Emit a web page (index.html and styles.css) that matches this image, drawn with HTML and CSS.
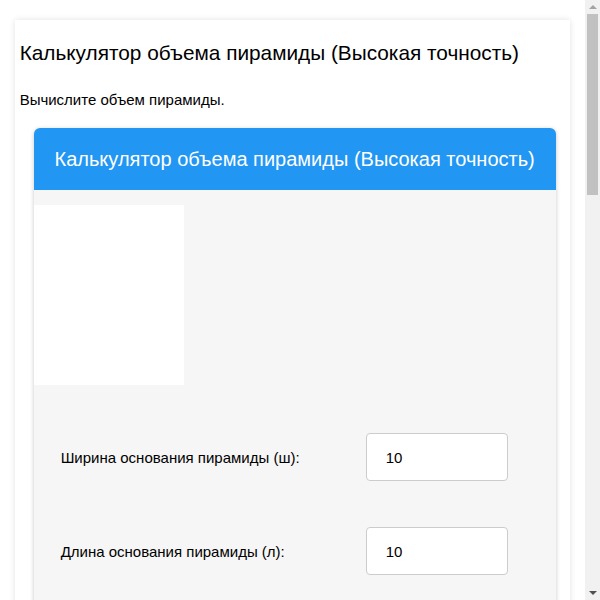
FILE: index.html
```html
<!DOCTYPE html>
<html lang="ru">
<head>
<meta charset="utf-8">
<title>Калькулятор объема пирамиды</title>
<link rel="stylesheet" href="styles.css">
</head>
<body>
<div class="page">
  <h1 class="page-title">Калькулятор объема пирамиды (Высокая точность)</h1>
  <p class="intro">Вычислите объем пирамиды.</p>
  <div class="calc">
    <div class="calc-header">Калькулятор объема пирамиды (Высокая точность)</div>
    <div class="calc-body">
      <div class="figure"></div>
      <div class="rows">
        <div class="row">
          <label class="row-label" for="w">Ширина основания пирамиды (ш):</label>
          <input class="row-input" id="w" type="text" value="10">
        </div>
        <div class="row">
          <label class="row-label" for="l">Длина основания пирамиды (л):</label>
          <input class="row-input" id="l" type="text" value="10">
        </div>
        <div class="row">
          <label class="row-label" for="h">Высота пирамиды (в):</label>
          <input class="row-input" id="h" type="text" value="10">
        </div>
        <div class="row">
          <label class="row-label" for="d">Значащие цифры:</label>
          <input class="row-input" id="d" type="text" value="10">
        </div>
        <div class="row row-center">
          <button class="calc-btn" type="button">Рассчитать</button>
        </div>
        <div class="row">
          <span class="row-label">Объем пирамиды (V):</span>
          <input class="row-input" type="text" value="333.3333333">
        </div>
        <div class="row">
          <span class="row-label">Площадь основания (S):</span>
          <input class="row-input" type="text" value="100">
        </div>
      </div>
    </div>
  </div>
  <div class="notes">
    <h2 class="notes-title">Формула</h2>
    <p class="notes-text">V = (ш × л × в) / 3</p>
    <p class="notes-text">Объем пирамиды равен одной трети произведения площади основания на высоту.</p>
    <h2 class="notes-title">Как пользоваться</h2>
    <p class="notes-text">Введите ширину и длину основания, а также высоту пирамиды, затем нажмите кнопку «Рассчитать».</p>
    <p class="notes-text">Количество значащих цифр задаёт точность, с которой будет показан результат.</p>
  </div>
</div>
<div class="scrollbar" aria-hidden="true">
  <div class="sb-btn"><span class="sb-up"></span></div>
  <div class="sb-track">
    <div class="sb-thumb"></div>
  </div>
  <div class="sb-btn"><span class="sb-down"></span></div>
</div>
</body>
</html>
```

FILE: styles.css
```css
html {
  margin: 0;
  padding: 0;
}

body {
  margin: 0;
  padding: 0 15px 0 0;
  background: #ffffff;
  font-family: "Liberation Sans", Arial, sans-serif;
  color: #000;
}

.page {
  width: 95%;
  margin: 20px auto 0;
  padding: 5px 5px 40px;
  box-sizing: border-box;
  background: #fff;
  box-shadow: 0 0 6px rgba(0, 0, 0, 0.12);
}

.page-title {
  font-size: 20.8px;
  font-weight: normal;
  margin: 16px 0 26px;
}

.intro {
  font-size: 15px;
  margin: 0 0 20px;
}

.calc {
  margin-left: 14px;
  width: 522px;
  border-radius: 6px;
  overflow: hidden;
  background: #f6f6f6;
  box-shadow: 0 1px 4px rgba(0, 0, 0, 0.22);
}

.calc-header {
  background: #2196f3;
  color: #fff;
  font-size: 20px;
  line-height: 23px;
  padding: 20px 0 19px;
  text-align: center;
}

.calc-body {
  padding: 15px 0 30px;
}

.figure {
  width: 150px;
  height: 180px;
  background: #fff;
}

.rows {
  margin-top: 25px;
  padding: 0 48px 0 27px;
}

.row {
  display: flex;
  align-items: center;
  justify-content: space-between;
  padding: 23px 0;
}

.row-center {
  justify-content: center;
}

.row-label {
  font-size: 15px;
}

.row-input {
  width: 142px;
  height: 48px;
  box-sizing: border-box;
  border: 1px solid #cccccc;
  border-radius: 4px;
  background: #fff;
  padding: 0 19px;
  font-family: "Liberation Sans", Arial, sans-serif;
  font-size: 15px;
  color: #000;
}

.calc-btn {
  background: #2196f3;
  color: #fff;
  border: none;
  border-radius: 4px;
  padding: 14px 40px;
  font-family: "Liberation Sans", Arial, sans-serif;
  font-size: 16px;
}

.notes {
  padding: 20px 14px 0;
}

.notes-title {
  font-size: 18px;
  font-weight: normal;
  margin: 30px 0 16px;
}

.notes-text {
  font-size: 15px;
  line-height: 24px;
  margin: 0 0 16px;
}

/* scrollbar drawn over the right edge of the viewport */
.scrollbar {
  position: fixed;
  top: 0;
  right: 0;
  width: 15px;
  height: 100vh;
  background: #f1f1f1;
  display: flex;
  flex-direction: column;
}

.sb-btn {
  height: 14px;
  display: flex;
  align-items: center;
  justify-content: center;
  flex: none;
}

.sb-up {
  width: 0;
  height: 0;
  border-left: 4px solid transparent;
  border-right: 4px solid transparent;
  border-bottom: 4px solid #a3a3a3;
}

.sb-down {
  width: 0;
  height: 0;
  border-left: 4px solid transparent;
  border-right: 4px solid transparent;
  border-top: 4px solid #505050;
}

.sb-track {
  flex: 1;
  padding: 0 2px;
}

.sb-thumb {
  height: 181px;
  background: #c1c1c1;
}
```
